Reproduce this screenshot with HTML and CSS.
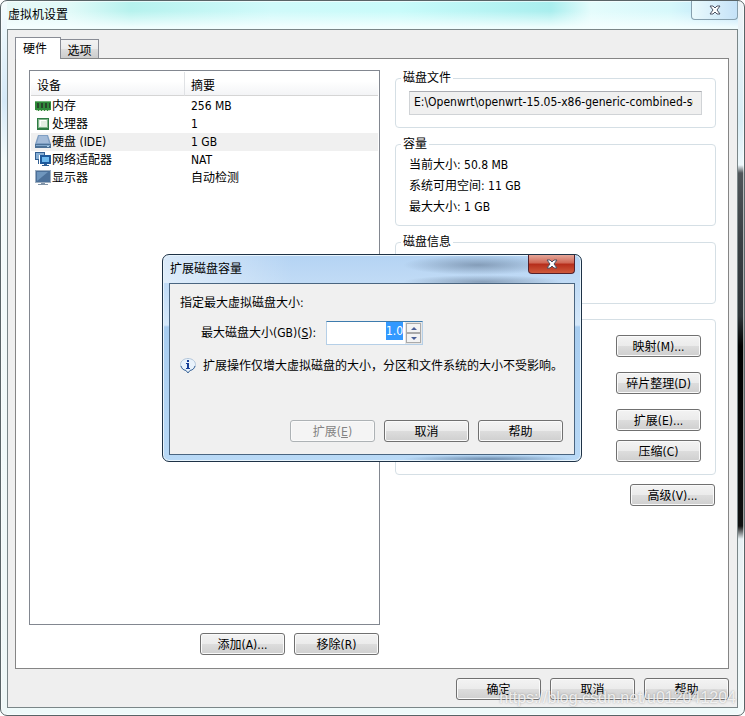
FILE: index.html
```
<!DOCTYPE html>
<html lang="zh-CN">
<head>
    <meta charset="UTF-8">
    <meta name="viewport" content="width=device-width, initial-scale=1.0">
    <title>虚拟机设置</title>
    <link rel="stylesheet" href="styles.css">
</head>
<body>
    <div class="window">
        <header class="titlebar">
            <h1>虚拟机设置</h1>
            <button class="close" aria-label="关闭">
                <svg width="12" height="10" viewBox="0 0 12 10"><path d="M1 1h3l2 2 2-2h3L8 5l3 4H8L6 7 4 9H1l3-4z"/></svg>
            </button>
        </header>

        <main class="client">
            <nav class="tabs">
                <button class="tab active">硬件</button>
                <button class="tab">选项</button>
            </nav>

            <div class="panel">
                <!-- 设备列表 -->
                <section class="left">
                    <div class="list">
                        <table>
                            <thead>
                                <tr><th class="device">设备</th><th>摘要</th></tr>
                            </thead>
                            <tbody>
                                <tr>
                                    <td><span class="name"><svg width="16" height="16" viewBox="0 0 16 16"><path fill="#2f8a3a" d="M0 3h16v9h-1v1H1v-1H0z"/><path fill="#71b477" d="M0 3h16v1H0z"/><path fill="#29462b" d="M2 5h2v5H2zm4 0h2v5H6zm4 0h2v5h-2zm4 0h1v5h-1z"/><path fill="#c4dcc0" d="M1 12h2v1H1zm3 0h2v1H4zm3 0h2v1H7zm3 0h2v1h-2zm3 0h2v1h-2z"/></svg>内存</span></td>
                                    <td>256 MB</td>
                                </tr>
                                <tr>
                                    <td><span class="name"><svg width="16" height="16" viewBox="0 0 16 16"><path fill="#2e7b43" d="M2 2h12v12H2z"/><path fill="#81b58c" d="M3 3h10v9H3z"/><path fill="#e3eee3" d="M4 4h8v7H4z"/><path fill="#fff" d="M5 4h6v1H6v5H5z"/></svg>处理器</span></td>
                                    <td>1</td>
                                </tr>
                                <tr class="selected">
                                    <td><span class="name"><svg width="16" height="16" viewBox="0 0 16 16"><path fill="#7f9fc3" d="M3 1h10l3 9H0z"/><path fill="#a3bbd8" d="M4 2h8l2 7H2z"/><path fill="#4c7197" d="M0 10h16v4H0z"/><path fill="#83a9cd" d="M1 11h14v1H1z"/><path fill="#b8d9ee" d="M12 12h2v1h-2z"/></svg>硬盘 (IDE)</span></td>
                                    <td>1 GB</td>
                                </tr>
                                <tr>
                                    <td><span class="name"><svg width="16" height="16" viewBox="0 0 16 16"><path fill="#315f92" d="M0 0h10v8H0z"/><path fill="#86aed4" d="M1 1h8v6H1z"/><path fill="#315f92" d="M3 8h2v4H3z"/><path fill="#fff" d="M4 3h12v9H4z"/><path fill="#1e5a9c" d="M5 3h11v9H5z"/><path fill="#6db9ee" d="M7 5h7v5H7z"/><path fill="#315f92" d="M9 12h3v1h2v1H7v-1h2z"/></svg>网络适配器</span></td>
                                    <td>NAT</td>
                                </tr>
                                <tr>
                                    <td><span class="name"><svg width="16" height="16" viewBox="0 0 16 16"><path fill="#9fb0c2" d="M0 0h16v13H0z"/><path fill="#4d719a" d="M1 1h14v11H1z"/><path fill="#6f96bd" d="M2 2h11L2 11z"/><path fill="#8093a7" d="M6 13h4v1h3v1H3v-1h3z"/></svg>显示器</span></td>
                                    <td>自动检测</td>
                                </tr>
                            </tbody>
                        </table>
                    </div>
                    <div class="buttons">
                        <button class="btn">添加(A)...</button>
                        <button class="btn">移除(R)</button>
                    </div>
                </section>

                <!-- 磁盘设置 -->
                <section class="right">
                    <fieldset class="file">
                        <legend>磁盘文件</legend>
                        <input type="text" aria-label="磁盘文件" readonly value="E:\Openwrt\openwrt-15.05-x86-generic-combined-squashfs.vmdk">
                    </fieldset>
                    <fieldset class="capacity">
                        <legend>容量</legend>
                        <p>当前大小: 50.8 MB</p>
                        <p>系统可用空间: 11 GB</p>
                        <p>最大大小: 1 GB</p>
                    </fieldset>
                    <fieldset class="info">
                        <legend>磁盘信息</legend>
                    </fieldset>
                    <div class="tools">
                        <button class="btn">映射(M)...</button>
                        <button class="btn">碎片整理(D)</button>
                        <div class="resize">
                            <button class="btn">扩展(E)...</button>
                            <button class="btn">压缩(C)</button>
                        </div>
                    </div>
                    <button class="btn advanced">高级(V)...</button>
                </section>
            </div>

            <div class="buttons">
                <button class="btn">确定</button>
                <button class="btn">取消</button>
                <button class="btn">帮助</button>
            </div>
        </main>
        <span class="watermark">https://blog.csdn.net/u012041204</span>
    </div>

    <!-- 扩展磁盘容量对话框 -->
    <div class="dialog" role="dialog" aria-labelledby="dialogTitle">
        <header class="titlebar">
            <h2 id="dialogTitle">扩展磁盘容量</h2>
            <button class="close red" aria-label="关闭">
                <svg width="12" height="10" viewBox="0 0 12 10"><path d="M1 1h3l2 2 2-2h3L8 5l3 4H8L6 7 4 9H1l3-4z"/></svg>
            </button>
        </header>
        <div class="dialog-body">
            <p>指定最大虚拟磁盘大小:</p>
            <div class="size-row">
                <label for="size">最大磁盘大小(GB)(<u>S</u>):</label>
                <div class="spin">
                    <input type="text" id="size" value="1.0">
                    <div class="arrows">
                        <button aria-label="增加"><svg width="6" height="3" viewBox="0 0 6 3"><path d="M0 3l3-3 3 3z"/></svg></button>
                        <button aria-label="减少"><svg width="6" height="3" viewBox="0 0 6 3"><path d="M0 0l3 3 3-3z"/></svg></button>
                    </div>
                </div>
            </div>
            <p class="note">
                <svg width="16" height="16" viewBox="0 0 16 16"><path fill="#e9f2fb" stroke="#b3c6da" d="M8 .5c4 0 7.500 2.500 7.500 6 0 3-2 5.500-5.500 6L8 15l-2-2.500c-3.500-.5-5.500-3-5.500-6 0-3.500 3.500-6 7.500-6z"/><path fill="none" stroke="#41699b" d="M15 8c-1 3-2.500 4-5 4.500L8 15l-2-2.500C3.500 12 2 11 1 8"/><path fill="#173f97" d="M7 2h2v2H7zM6 5h3v5h1v1H6v-1h1V6H6z"/></svg>
                扩展操作仅增大虚拟磁盘的大小，分区和文件系统的大小不受影响。
            </p>
            <div class="buttons">
                <button class="btn" disabled>扩展(<u>E</u>)</button>
                <button class="btn">取消</button>
                <button class="btn">帮助</button>
            </div>
        </div>
    </div>

    <script>
        document.getElementById('size').select();
        document.getElementById('size').focus();
    </script>
</body>
</html>
```
FILE: styles.css
```
* {
    box-sizing: border-box;
}
body {
    margin: 0;
    background: #fff;
}
body, button, input {
    font-family: "DejaVu Sans Condensed", "Noto Sans CJK SC", sans-serif;
    font-size: 12px;
    line-height: 18px;
    color: #000;
}
h1, h2, p {
    margin: 0;
    font-size: 12px;
    font-weight: normal;
}
.window {
    position: relative;
    display: flex;
    flex-direction: column;
    min-height: 100vh;
    padding: 0 6px 7px;
    border: 1px solid #596467;
    border-radius: 7px;
    background:
        linear-gradient(#eef4f8, #d9eef6 120px, #eef8fc 164px, #50565a 172px, #3a4044 240px, #2e3438 315px, #000 345px, #101010 525px, #e8f1f4 538px, #f3fbfb) right top / 6px 100% no-repeat,
        linear-gradient(#f5fdfd, #d5e9f7 100px, #f4fbfb 160px, #eef7f7) left top / 6px 100% no-repeat,
        linear-gradient(to bottom, rgba(255, 255, 255, 0) 10px, rgba(245, 255, 255, 0.9) 26px) left top / 100% 28px no-repeat,
        linear-gradient(to right, #e8f8f6, #e0faf8 70px, #b6f2ee 130px, #d0fafa 270px, #c8fbfa 400px, #a9eeee 550px, #e4fcfc 590px, #d6f8fb 670px, #b5dcf8) left top / 100% 28px no-repeat,
        #effafa;
    box-shadow: inset 0 0 0 1px rgba(255, 255, 255, 0.6);
}
.titlebar {
    display: flex;
    justify-content: space-between;
    height: 28px;
}
.titlebar h1, .titlebar h2 {
    padding: 5px 1px;
}
.close {
    width: 47px;
    height: 19px;
    padding: 0;
    border: 1px solid #87a0ae;
    border-top: 0;
    border-radius: 0 0 4px 4px;
    background: linear-gradient(to right, #eafafc, #c5e2f8);
}
.close svg {
    display: block;
    margin: 0 auto;
    fill: #fff;
    stroke: #4c5264;
}
.close.red {
    border-color: #54202a;
    background: linear-gradient(#e5a79a, #cf6553 45%, #b52c1a 50%, #cf5a3c);
}
.client {
    flex: 1;
    display: flex;
    flex-direction: column;
    gap: 9px;
    padding: 7px 8px 7px 7px;
    border: 1px solid #7a8688;
    background: #efefef;
}
.tabs {
    display: flex;
    align-items: flex-end;
    margin-bottom: -10px;
}
.tab {
    width: 38px;
    height: 20px;
    padding: 2px 0 0;
    border: 1px solid #898c95;
    border-left: 0;
    background: linear-gradient(#f2f2f2, #ebebeb 50%, #dddddd 50%, #cdcdcd);
}
.tab.active {
    position: relative;
    z-index: 1;
    width: 46px;
    height: 22px;
    padding: 0 7px;
    border-left: 1px solid #898c95;
    border-bottom: 0;
    text-align: left;
    background: #fff;
}
.panel {
    flex: 1;
    display: flex;
    gap: 15px;
    padding: 11px 12px 13px 13px;
    border: 1px solid #858585;
    background: #fff;
}
.left {
    flex: 351;
    display: flex;
    flex-direction: column;
    gap: 8px;
}
.list {
    flex: 1;
    border: 1px solid #828790;
    padding: 1px;
}
table {
    width: 100%;
    border-spacing: 0;
    table-layout: fixed;
}
th {
    height: 24px;
    padding: 4px 6px 0;
    border-bottom: 1px solid #d5d5d5;
    text-align: left;
    font-weight: normal;
    background: linear-gradient(#fff 40%, #f3f4f6);
}
.device {
    width: 154px;
    border-right: 1px solid #e0e2e5;
}
tbody::before {
    content: "";
    display: block;
    height: 1px;
}
td {
    height: 18px;
    padding: 0 6px;
}
td:first-child {
    padding: 0 4px;
}
.name {
    display: flex;
    align-items: center;
    gap: 1px;
}
.selected {
    background: #f0f0f0;
}
.buttons {
    display: flex;
    justify-content: flex-end;
    gap: 9px;
}
.btn {
    width: 85px;
    height: 22px;
    padding: 2px 0 0;
    border: 1px solid #707070;
    border-radius: 3px;
    background: linear-gradient(#f3f3f3, #ebebeb 50%, #dddddd 50%, #cfcfcf);
    box-shadow: inset 0 0 0 1px #fafafa;
}
.btn:disabled {
    border-color: #adb2b5;
    color: #838383;
    background: #f4f4f4;
}
.left .buttons {
    padding-right: 1px;
}
.right {
    flex: 321;
    min-width: 0;
    display: flex;
    flex-direction: column;
}
fieldset {
    min-width: 0;
    margin: 0 0 8px;
    padding: 0 13px;
    border: 1px solid #d5dfe5;
    border-radius: 4px;
}
legend {
    height: 16px;
    margin-left: -8px;
    padding: 0 2px;
    line-height: 16px;
}
.file input {
    display: block;
    width: 100%;
    height: 24px;
    margin: 5px 0 12px;
    padding: 0 8px 2px 4px;
    border: 1px solid #d0d3d6;
    border-top-color: #abadb3;
    background: #f0f0f0;
}
.capacity {
    padding-bottom: 7px;
}
.capacity p {
    line-height: 21px;
}
.capacity legend {
    margin-bottom: 3px;
}
.info {
    height: 70px;
    margin-bottom: 15px;
}
.tools {
    display: flex;
    flex-direction: column;
    align-items: flex-end;
    gap: 15px;
    margin-bottom: 9px;
    padding: 15px 14px 12px;
    border: 1px solid #d5dfe5;
    border-radius: 4px;
}
.resize {
    display: flex;
    flex-direction: column;
    gap: 9px;
}
.advanced {
    align-self: flex-end;
    margin-right: 1px;
}
.watermark {
    position: absolute;
    right: 8px;
    bottom: 8px;
    font-family: "Liberation Sans", Arial, sans-serif;
    font-size: 16px;
    color: rgba(255, 255, 255, 0.8);
    text-shadow: 0 0 2px rgba(100, 100, 100, 0.6);
    pointer-events: none;
}
.dialog {
    position: absolute;
    left: 162px;
    top: 254px;
    width: 420px;
    padding: 0 6px 6px;
    border: 1px solid #1e3246;
    border-radius: 7px;
    background:
        radial-gradient(closest-side, rgba(80, 100, 125, 0.5), rgba(80, 100, 125, 0)) 240px 0 / 150px 20px no-repeat,
        radial-gradient(closest-side, rgba(80, 100, 125, 0.5), rgba(80, 100, 125, 0)) 240px 20px / 160px 14px no-repeat,
        radial-gradient(closest-side, rgba(60, 90, 125, 0.6), rgba(60, 90, 125, 0)) 240px 200px / 170px 8px no-repeat,
        linear-gradient(to right, rgba(255, 255, 255, 0.5), rgba(255, 255, 255, 0) 130px) left top / 100% 28px no-repeat,
        linear-gradient(#b4d3f3, #d5e8fa 70px, #a8cdf0 72px, #b9d9f6);
    box-shadow: inset 0 0 0 1px #e8f4fc;
}
.dialog-body {
    padding: 10px 11px 12px 10px;
    border: 1px solid #4a6580;
    background: #f0f0f0;
}
.size-row {
    display: flex;
    align-items: center;
    gap: 10px;
    margin: 9px 0 12px 21px;
}
.spin {
    display: flex;
    width: 97px;
    height: 24px;
    border: 1px solid #b5cfe7;
    border-top-color: #3d7bad;
    background: #fff;
}
.spin input {
    flex: 1;
    min-width: 0;
    padding: 0 2px 4px;
    border: 0;
    outline: 0;
    text-align: right;
}
.spin input::selection {
    color: #fff;
    background: #3399ff;
}
.arrows {
    display: flex;
    flex-direction: column;
    width: 17px;
    padding: 1px;
    background: #e6e6e6;
}
.arrows button {
    flex: 1;
    display: flex;
    align-items: center;
    justify-content: center;
    padding: 0;
    border: 1px solid #aaa;
    background: #f3f3f3;
}
.arrows path {
    fill: #4a5f97;
}
.note {
    display: flex;
    align-items: center;
    gap: 7px;
    margin-bottom: 45px;
    white-space: nowrap;
}
```
